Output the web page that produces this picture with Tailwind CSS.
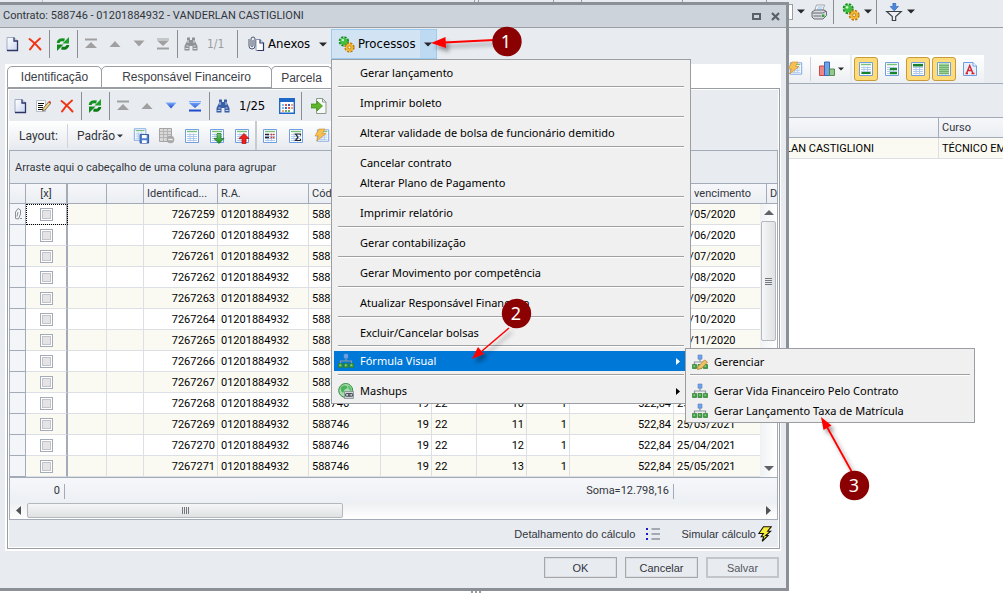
<!DOCTYPE html>
<html lang="pt-BR">
<head>
<meta charset="utf-8">
<title>Contrato: 588746</title>
<script src="https://cdn.jsdelivr.net/npm/@tailwindcss/browser@4"></script>
</head>
<body class="bg-white text-[11px] leading-4 text-[#32353c] font-['Roboto','Liberation_Sans',sans-serif]">

<svg class="absolute size-0" aria-hidden="true">
  <defs>
    <linearGradient id="gPage" x1="0" y1="0" x2="1" y2="1"><stop offset="0" stop-color="#fff"/><stop offset="1" stop-color="#c9d6f0"/></linearGradient>
    <linearGradient id="gBlue" x1="0" y1="0" x2="0" y2="1"><stop offset="0" stop-color="#7fb0ff"/><stop offset="1" stop-color="#1440c8"/></linearGradient>
    <linearGradient id="gGreen" x1="0" y1="0" x2="0" y2="1"><stop offset="0" stop-color="#6ed06e"/><stop offset="1" stop-color="#1d8a1d"/></linearGradient>
  </defs>
  <symbol id="doc" viewBox="0 0 16 16"><path d="M3 1.500h7l3.500 3.500v9.500H3z" fill="url(#gPage)" stroke="#a3acc4"/><path d="M10 1.500V5h3.500v9.500H3" fill="none" stroke="#2c3566" stroke-width="1.300"/></symbol>
  <symbol id="del" viewBox="0 0 16 16"><path d="M2.500 3C6 5.500 10 9.500 13.500 13.500M13 2.500C9 5.500 6 9 3 13.500" fill="none" stroke="#f03516" stroke-width="2" stroke-linecap="round"/></symbol>
  <symbol id="refresh" viewBox="0 0 16 16"><path d="M3.200 7C3.200 4.500 6 3 9.500 4" fill="none" stroke="#149020" stroke-width="3"/><path d="M14 1v6.500H7.500z" fill="#1fa02a"/><path d="M12.800 9c0 2.500-2.800 4-6.300 3" fill="none" stroke="#0d7a18" stroke-width="3"/><path d="M2 15V8.500h6.500z" fill="#128a1e"/></symbol>
  <symbol id="first" viewBox="0 0 16 16"><path d="M2 2.500h12v2H2zM8 6l6 6H2z" fill="#a0a0a0"/></symbol>
  <symbol id="up" viewBox="0 0 16 16"><path d="M8 5l5.500 6h-11z" fill="#a0a0a0"/></symbol>
  <symbol id="down" viewBox="0 0 16 16"><path d="M8 10.500l5.500-6h-11z" fill="#a0a0a0"/></symbol>
  <symbol id="last" viewBox="0 0 16 16"><path d="M2 11.500h12v2H2zM2 2.500h12v1H2zM8 10l6-5.500H2z" fill="#a0a0a0"/></symbol>
  <symbol id="downB" viewBox="0 0 16 16"><path d="M8 10.500l5.500-6h-11z" fill="url(#gBlue)"/></symbol>
  <symbol id="lastB" viewBox="0 0 16 16"><path d="M2 11.500h12v2H2zM2 3h12v1.200H2zM8 10l6-5H2z" fill="url(#gBlue)"/></symbol>
  <symbol id="bino" viewBox="0 0 16 16"><path d="M4 1.500h3V4h2V1.500h3V5l2.500 5v4.500h-5V10h-3v4.500h-5V10L4 5z" fill="currentColor"/><path d="M3.500 10h2M10.500 10h2M5 4v3M11 4v3M2.500 12.500h3M10.500 12.500h3" stroke="#fff" stroke-width="1" opacity=".75"/></symbol>
  <symbol id="clip" viewBox="0 0 18 16"><path d="M9 3.500h4l3.500 3.500v7.500H9z" fill="#fff" stroke="#8a94b0"/><path d="M13 3.500V7h3.500v7.500h-6" fill="none" stroke="#2c3566" stroke-width="1.200"/><path d="M2 3v7a3 3 0 006 0V3a2 2 0 00-4 0v6.500a1 1 0 002 0V4" fill="none" stroke="#4c566e" stroke-width="1"/></symbol>
  <symbol id="gears" viewBox="0 0 16 16"><circle cx="5.500" cy="5" r="3.800" fill="none" stroke="#178a1e" stroke-width="2.200" stroke-dasharray="2 1"/><circle cx="5.500" cy="5" r="3.400" fill="#3fc043"/><circle cx="4.500" cy="3.800" r="1.200" fill="#c8f5c4"/><circle cx="10.800" cy="10.800" r="3.800" fill="none" stroke="#c27d08" stroke-width="2.200" stroke-dasharray="2 1"/><circle cx="10.800" cy="10.800" r="3.400" fill="#f5b52c"/><circle cx="10.800" cy="10.800" r="1.300" fill="#fff3cf" stroke="#9c6a10" stroke-width=".6"/></symbol>
  <symbol id="edit" viewBox="0 0 16 16"><path d="M1.500 2.500h9v11h-9z" fill="#fff" stroke="#b6bccb"/><path d="M3 5.500h6M3 7.500h5M3 9.500h5M3 11.500h6" stroke="#111" stroke-width="1.100"/><path d="M8 10.500l5.500-6.500 2 1.600-5.300 6.400-2.600 1z" fill="#f2cf87" stroke="#5a4a2a" stroke-width=".7"/><path d="M13.500 4l1-1.200 2 1.500-1 1.300z" fill="#d43a30"/></symbol>
  <symbol id="cal" viewBox="0 0 16 16"><path d="M.7.700h14.600v14.600H.7z" fill="#fff" stroke="#1e68c8" stroke-width="1.400"/><path d="M1 1h14v3H1z" fill="#1e68c8"/><path d="M3 6h2v2H3zM3 9h2v2H3z" fill="#7cc0f0"/><path d="M6 6h2v2H6zM9 9h2v2H9z" fill="#e0584a"/><path d="M9 6h2v2H9zM6 9h2v2H6z" fill="#3c5fc8"/><path d="M12 6h2v2h-2zM12 9h2v2h-2zM3 12h2v2H3z" fill="#f4a070"/><path d="M6 12h2v2H6zM9 12h2v2H9z" fill="#63b463"/></symbol>
  <symbol id="docgo" viewBox="0 0 16 16"><path d="M5.500.500h6l3.500 3.500v11.500H5.500z" fill="#f6faf6" stroke="#8c9a8c"/><path d="M11.500.500V4H15" fill="none" stroke="#8c9a8c"/><path d="M0 6h6V3l5.500 5L6 13v-3H0z" fill="#5fb52c" stroke="#3b8a12" stroke-width=".7"/></symbol>
  <symbol id="grid" viewBox="0 0 16 16"><path d="M1.500 1.500h13v13h-13z" fill="#fff" stroke="#6f9fe0"/><path d="M3 3.500h10" stroke="#79c07d" stroke-width="1.500"/><path d="M3 6.500h10M3 8.500h10M3 10.500h10M3 12.500h10M6 5.500v8M9.500 5.500v8" stroke="#a9c4ec" stroke-width=".9"/></symbol>
  <symbol id="gsave" viewBox="0 0 18 17"><use href="#grid" width="15" height="15"/><path d="M7.500 7.500h9v9h-9z" fill="#4d80d0" stroke="#2a56a4"/><path d="M9.500 8h5v3.500h-5zM9.500 13.500h5v3h-5z" fill="#fff"/></symbol>
  <symbol id="ggray" viewBox="0 0 17 17"><path d="M1.500 1.500h12v13h-12z" fill="#d9d9d9" stroke="#a5a5a5"/><path d="M2 4.500h11M2 7.500h11M2 10.500h11M5.500 2v12M9.500 2v12" stroke="#b4b4b4"/><circle cx="12.500" cy="12.500" r="3.800" fill="#a8a8a8"/><path d="M10.300 12.500h4.400" stroke="#eee" stroke-width="1.400"/></symbol>
  <symbol id="gdown" viewBox="0 0 16 16"><use href="#grid" width="16" height="16"/><path d="M8 5.500h4v5h3l-5 5-5-5h3z" fill="url(#gGreen)" stroke="#1c6b1a" stroke-width=".7"/></symbol>
  <symbol id="gup" viewBox="0 0 16 16"><use href="#grid" width="16" height="16"/><path d="M8 15.500h4v-5h3l-5-5-5 5h3z" fill="#f0201c" stroke="#a40c0c" stroke-width=".7"/></symbol>
  <symbol id="gfmt" viewBox="0 0 16 16"><use href="#grid" width="16" height="16"/><path d="M3 6.500h4M3 9.500h4" stroke="#22262c" stroke-width="1.300"/><path d="M8.500 6.500h4M8.500 9.500h4" stroke="#d23838" stroke-width="1.300" stroke-dasharray="1.700 .7"/></symbol>
  <symbol id="gsum" viewBox="0 0 16 16"><use href="#grid" width="16" height="16"/><path d="M12.500 7.500V6h-5L10 9.200l-2.500 3.300h5V11" fill="none" stroke="#26282c" stroke-width="1.200"/></symbol>
  <symbol id="gbolt" viewBox="0 0 16 16"><use href="#grid" x="2" width="14" height="15"/><path d="M5 1h6L8.500 5.500H12L2.500 13 4.500 8H1z" fill="#f6c053" stroke="#c98a24" stroke-width=".6"/></symbol>
  <symbol id="chart" viewBox="0 0 17 16"><path d="M1 5h5v9.500H1z" fill="#ee8686" stroke="#c43b3b" stroke-width=".9"/><path d="M6 1h5v13.500H6z" fill="#6fa2e6" stroke="#2b5fae" stroke-width=".9"/><path d="M11 8h5v6.500h-5z" fill="#93c98d" stroke="#4a8644" stroke-width=".9"/></symbol>
  <symbol id="gtop" viewBox="0 0 16 16"><use href="#grid" width="16" height="16"/><path d="M3 3h10v2.500H3z" fill="#17822c"/></symbol>
  <symbol id="gbot" viewBox="0 0 16 16"><use href="#grid" width="16" height="16"/><path d="M3.500 11h9v2h-9z" fill="#17822c"/></symbol>
  <symbol id="gmid" viewBox="0 0 16 16"><use href="#grid" width="16" height="16"/><path d="M6 7h7v2.300H6zM6 11h7v2.300H6z" fill="#17822c"/></symbol>
  <symbol id="gall" viewBox="0 0 16 16"><use href="#grid" width="16" height="16"/><path d="M3 2.500h10v11H3z" fill="#9ed293"/><path d="M3 4.500h10M3 6.500h10M3 8.500h10M3 10.500h10M3 12.500h10" stroke="#5fa86b" stroke-width=".8"/></symbol>
  <symbol id="afont" viewBox="0 0 16 16"><path d="M1.500 1.500H11l3.500 3.500v9.500h-13z" fill="#e6f0fc" stroke="#6f9fe0"/><path d="M11 1.500V5h3.500" fill="#fff" stroke="#6f9fe0"/><path d="M4.500 12.500L7.700 4.500l3.300 8M5.700 9.500h4M3.500 12.500h2.500M9.500 12.500h3" fill="none" stroke="#d8232a" stroke-width="1.400"/></symbol>
  <symbol id="printer" viewBox="0 0 16 16"><path d="M5.500 1h8l-2 6h-8z" fill="#fff" stroke="#8a8f98" stroke-width=".8"/><path d="M6.500 3h5M6 5h5" stroke="#6fa8e0" stroke-width=".8"/><path d="M1 8l3-2h9l2.500 1.500v4L12 15H3l-2-2z" fill="#d8dbe0" stroke="#5c6068" stroke-width=".9"/><path d="M1.500 9h10.500l3-2M2.500 12h8" fill="none" stroke="#5c6068" stroke-width=".9"/><path d="M11 10.500h2.500V13H11z" fill="#27ad33"/></symbol>
  <symbol id="funnel" viewBox="0 0 16 16"><path d="M7 0h2.500v3H12L8.200 7 4.500 3H7z" fill="#4b86dc" stroke="#2a5db0" stroke-width=".5"/><path d="M1.500 7.500h13l-5 4.500v3.500h-3V12z" fill="#eceff3" stroke="#3c4046"/></symbol>
  <symbol id="tree" viewBox="0 0 16 16"><path d="M8 5v3M2.500 10.500V8h11v2.500" fill="none" stroke="#8d97a6" stroke-width="1.200"/><path d="M6 1h4v4.200H6z" fill="#6ea3ea" stroke="#5784c4" stroke-width=".6"/><path d="M.5 10.500h4v4h-4zM6 10.500h4v4H6zM11.500 10.500h4v4h-4z" fill="#43a045" stroke="#2d7d30" stroke-width=".7"/><path d="M1.500 11.500h1.500v1.200H1.500zM7 11.500h1.500v1.200H7zM12.500 11.500H14v1.200h-1.500z" fill="#9bdc98"/></symbol>
  <symbol id="treeEdit" viewBox="0 0 16 16"><use href="#tree" width="16" height="16"/><path d="M6 12.500l6.500-6.500 3 2-6 6.500-4 1z" fill="#edc069" stroke="#b58327" stroke-width=".8"/></symbol>
  <symbol id="mash" viewBox="0 0 16 16"><circle cx="7.700" cy="7.500" r="7" fill="#a9dcae" stroke="#2f8c40"/><path d="M2.500 4.500C5 1.500 9 2 9.500 4s-3 1.500-3.500 4-2 2-3-.5z" fill="#4bb25d"/><path d="M10 2.500c3 1 4 4 3.500 6L10.500 6z" fill="#5cbf6c"/><path d="M6.500 8.500h9v7h-9z" fill="#d2d6db" stroke="#7a8087" stroke-width=".7"/><rect x="7.500" y="10.500" width="4.500" height="2.800" rx="1.300" fill="none" stroke="#4d535a" stroke-width="1.100"/><rect x="10.500" y="10.500" width="4.300" height="2.800" rx="1.300" fill="none" stroke="#4d535a" stroke-width="1.100"/></symbol>
  <symbol id="list" viewBox="0 0 16 14"><path d="M1 1h2v2H1zM1 6h2v2H1zM1 11h2v2H1z" fill="#1818d8"/><path d="M6.500 2H15M6.500 7H15M6.500 12H15" stroke="#5f6670" stroke-width="1.200"/></symbol>
  <symbol id="bolt" viewBox="0 0 14 16"><path d="M5.500.700h7.800L9.700 5.200h3L7.800 9.500h2.300L4.200 15.300 5.800 10.700H3.200L5.300 7.500H.8z" fill="#f8ee3a" stroke="#14120a" stroke-width="1.100"/></symbol>
  <symbol id="caret" viewBox="0 0 8 5"><path d="M0 .500h8L4 4.500z" fill="currentColor"/></symbol>
  <symbol id="pin" viewBox="0 0 8 12"><path d="M1.500 9V4l2.500-3.500L6.500 2v4L4.500 11l-3-.500zM4 4L3 8.500M6 10.500h2" fill="none" stroke="#8c9096"/></symbol>
</svg>

<main class="relative flex min-h-screen flex-col overflow-hidden">

  <!-- main application -->
  <header class="flex h-7 items-center border-b border-[#9a9da2] bg-[#e8ecf1] pb-1 text-[#25272b]">
    <div class="flex w-[789px] shrink-0 self-stretch">
      <i class="ml-[42px] w-px bg-[#b9bdc3]"></i>
      <i class="ml-[431px] w-px bg-[#9a9da2]"></i>
      <i class="ml-[3px] w-px bg-[#9a9da2]"></i>
      <i class="ml-[74px] w-px bg-[#9a9da2]"></i>
      <i class="ml-[27px] w-px bg-[#9a9da2]"></i>
      <i class="ml-[100px] w-px bg-[#9a9da2]"></i>
      <i class="ml-[83px] w-px bg-[#9a9da2]"></i>
    </div>
    <span class="h-4 w-1 border-y border-r border-[#9a9da2] bg-white"></span>
    <svg class="ml-1 h-[5px] w-2"><use href="#caret"/></svg>
    <button type="button" aria-label="Imprimir" class="ml-1.5"><svg class="size-4"><use href="#printer"/></svg></button>
    <span class="ml-1.5 h-6 w-px bg-[#8a8d92]"></span>
    <button type="button" aria-label="Processos" class="ml-2 flex items-center gap-1"><svg class="size-[18px]"><use href="#gears"/></svg><svg class="h-[5px] w-2"><use href="#caret"/></svg></button>
    <span class="ml-1 h-6 w-px bg-[#8a8d92]"></span>
    <button type="button" aria-label="Filtro" class="ml-2 flex items-center gap-1"><svg class="size-[18px]"><use href="#funnel"/></svg><svg class="h-[5px] w-2"><use href="#caret"/></svg></button>
  </header>
  <div class="flex border-b border-[#a3abb9] bg-[#e8ecf1] pt-[27px] pl-[787px]">
    <div class="flex h-7 items-center bg-gradient-to-b from-white to-[#eceff2] pr-1.5">
      <svg class="size-4"><use href="#gbolt"/></svg>
      <span class="mx-[7px] h-6 w-px bg-[#cfd3d9]"></span>
      <svg class="h-4 w-[18px]"><use href="#chart"/></svg>
      <svg class="ml-0.5 h-1 w-1.5 text-[#25272b]"><use href="#caret"/></svg>
    </div>
    <div class="ml-0.5 flex h-7 items-center gap-0.5 bg-gradient-to-b from-white to-[#eceff2] px-0.5">
      <button type="button" aria-label="Rodapé" class="flex size-6 items-center justify-center rounded-[3px] border border-[#c79a3a] bg-[#ffdb7a]"><svg class="size-4"><use href="#gbot"/></svg></button>
      <button type="button" aria-label="Rodapé do grupo" class="flex size-6 items-center justify-center"><svg class="size-4"><use href="#gmid"/></svg></button>
      <button type="button" aria-label="Cabeçalho" class="flex size-6 items-center justify-center rounded-[3px] border border-[#c79a3a] bg-[#ffdb7a]"><svg class="size-4"><use href="#gtop"/></svg></button>
      <button type="button" aria-label="Linhas" class="flex size-6 items-center justify-center rounded-[3px] border border-[#c79a3a] bg-[#ffdb7a]"><svg class="size-4"><use href="#gall"/></svg></button>
      <button type="button" aria-label="Fonte" class="flex size-6 items-center justify-center"><svg class="size-4"><use href="#afont"/></svg></button>
    </div>
  </div>
  <div class="h-[33px] bg-[#e8ecf1]"></div>
  <table class="w-full table-fixed border-separate border-spacing-0">
    <colgroup><col class="w-[939px]"><col></colgroup>
    <thead><tr class="h-[21px]">
      <th class="border-y border-r border-[#a3abb9] bg-gradient-to-b from-[#f6f7fa] to-[#eaedf2] p-0"></th>
      <th class="border-y border-[#a3abb9] bg-gradient-to-b from-[#f6f7fa] to-[#eaedf2] p-0 pl-[3px] text-left font-normal">Curso</th>
    </tr></thead>
    <tbody><tr class="h-[21px] text-black">
      <td class="overflow-hidden border-r border-b border-[#dcdfe3] bg-[#fbfaf2] p-0 pt-px pl-[785px] whitespace-nowrap">LAN CASTIGLIONI</td>
      <td class="overflow-hidden border-b border-[#dcdfe3] bg-[#fbfaf2] p-0 pt-px pl-[3px] whitespace-nowrap">TÉCNICO EM</td>
    </tr></tbody>
  </table>
  <div class="mt-auto flex h-0.5 gap-0.5 pl-[471px]"><i class="w-0.5 bg-[#9a9da2]"></i><i class="w-0.5 bg-[#9a9da2]"></i><i class="w-0.5 bg-[#9a9da2]"></i></div>

  <!-- contract window -->
  <section aria-label="Contrato" class="absolute top-0.5 left-0 w-[789px] border-y-[3px] border-r-[3px] border-[#8b9096] bg-[#e8ecf1]">
    <div class="flex h-[23px] items-center border-b border-[#9a9da2] bg-[#ccd3db] pr-1.5 pl-[3px]">
      <h1 class="grow">Contrato: 588746 - 01201884932 - VANDERLAN CASTIGLIONI</h1>
      <button type="button" aria-label="Maximizar" class="mr-2.5 h-[7px] w-[9px] border-2 border-[#5b6068]"></button>
      <button type="button" aria-label="Fechar"><svg class="size-[9px]" viewBox="0 0 9 9"><path d="M1 1l7 7M8 1L1 8" stroke="#5b6068" stroke-width="2.200"/></svg></button>
    </div>

    <div class="flex h-8 items-center font-['DejaVu_Sans_Condensed','Noto_Sans',sans-serif] text-[13px] text-black">
      <button type="button" aria-label="Novo" class="flex w-[23px] justify-center"><svg class="size-4"><use href="#doc"/></svg></button>
      <button type="button" aria-label="Excluir" class="flex w-6 justify-center"><svg class="size-4"><use href="#del"/></svg></button>
      <span class="mr-px ml-0.5 h-7 w-px bg-[#8a8d92]"></span>
      <button type="button" aria-label="Atualizar" class="flex w-6 justify-center"><svg class="size-4"><use href="#refresh"/></svg></button>
      <span class="mr-px ml-0.5 h-7 w-px bg-[#8a8d92]"></span>
      <button type="button" aria-label="Primeiro" class="flex w-6 justify-center"><svg class="size-4"><use href="#first"/></svg></button>
      <button type="button" aria-label="Anterior" class="flex w-6 justify-center"><svg class="size-4"><use href="#up"/></svg></button>
      <button type="button" aria-label="Próximo" class="flex w-6 justify-center"><svg class="size-4"><use href="#down"/></svg></button>
      <button type="button" aria-label="Último" class="flex w-6 justify-center"><svg class="size-4"><use href="#last"/></svg></button>
      <span class="mr-px ml-0.5 h-7 w-px bg-[#8a8d92]"></span>
      <button type="button" aria-label="Localizar" class="flex w-6 justify-center text-[#8f9297]"><svg class="size-4"><use href="#bino"/></svg></button>
      <span class="w-8 pl-1 text-[12px] text-[#9a9ca0]">1/1</span>
      <span class="mr-px ml-0.5 h-7 w-px bg-[#8a8d92]"></span>
      <button type="button" class="flex w-[92px] items-center pr-1 pl-2"><svg class="mr-[3px] h-4 w-[18px]"><use href="#clip"/></svg>Anexos<svg class="ml-auto h-[5px] w-2 text-[#25272b]"><use href="#caret"/></svg></button>
      <button type="button" class="flex h-[30px] w-[106px] items-center border border-[#9ccdf0] bg-[#d2e4f4] pl-1.5"><svg class="mr-[3px] size-[17px]"><use href="#gears"/></svg>Processos<span class="ml-auto flex h-full w-4 items-center justify-center bg-[#bddaf2]"><svg class="h-[5px] w-2 text-[#25272b]"><use href="#caret"/></svg></span></button>
    </div>

    <div class="mt-1 mr-[5px] ml-[5px] bg-white px-px pb-0.5">
      <div role="tablist" class="ml-px flex h-6 items-stretch pt-0.5 font-['Liberation_Sans',sans-serif] text-[12px] text-[#3c4048]">
        <button role="tab" type="button" class="w-[95px] rounded-t-[5px] border border-[#9a9da2]">Identificação</button>
        <button role="tab" type="button" class="-ml-px w-[171px] rounded-t-[5px] border border-[#9a9da2]">Responsável Financeiro</button>
        <button role="tab" type="button" aria-selected="true" class="-ml-px w-[61px] rounded-t-[5px] border border-b-0 border-[#9a9da2]">Parcela</button>
      </div>

      <div class="ml-px border border-[#9a9da2] bg-white p-px">
        <div class="bg-[#e8ecf1]">
          <div class="flex h-[31px] items-center font-['DejaVu_Sans_Condensed','Noto_Sans',sans-serif] text-[13px] text-black">
            <button type="button" aria-label="Nova parcela" class="flex w-[22px] justify-center"><svg class="size-4"><use href="#doc"/></svg></button>
            <button type="button" aria-label="Editar parcela" class="flex w-6 justify-center"><svg class="size-4"><use href="#edit"/></svg></button>
            <button type="button" aria-label="Excluir parcela" class="flex w-6 justify-center"><svg class="size-4"><use href="#del"/></svg></button>
            <span class="mr-px ml-0.5 h-7 w-px bg-[#8a8d92]"></span>
            <button type="button" aria-label="Atualizar parcelas" class="flex w-6 justify-center"><svg class="size-4"><use href="#refresh"/></svg></button>
            <span class="mr-px ml-0.5 h-7 w-px bg-[#8a8d92]"></span>
            <button type="button" aria-label="Primeira parcela" class="flex w-6 justify-center"><svg class="size-4"><use href="#first"/></svg></button>
            <button type="button" aria-label="Parcela anterior" class="flex w-6 justify-center"><svg class="size-4"><use href="#up"/></svg></button>
            <button type="button" aria-label="Próxima parcela" class="flex w-6 justify-center"><svg class="size-4"><use href="#downB"/></svg></button>
            <button type="button" aria-label="Última parcela" class="flex w-6 justify-center"><svg class="size-4"><use href="#lastB"/></svg></button>
            <span class="mr-px ml-0.5 h-7 w-px bg-[#8a8d92]"></span>
            <button type="button" aria-label="Localizar parcela" class="flex w-6 justify-center text-[#3a5ea8]"><svg class="size-4"><use href="#bino"/></svg></button>
            <span class="w-10 pl-1 text-[13px]">1/25</span>
            <button type="button" aria-label="Calendário" class="flex w-6 justify-center"><svg class="size-4"><use href="#cal"/></svg></button>
            <span class="mr-px ml-0.5 h-7 w-px bg-[#8a8d92]"></span>
            <button type="button" aria-label="Exportar" class="flex w-8 justify-center"><svg class="size-4"><use href="#docgo"/></svg></button>
          </div>

          <div class="flex h-[29px] w-[340px] items-center bg-gradient-to-b from-white to-[#e6e9ee] pl-2.5 text-[12px]">
            <span class="w-12">Layout:</span>
            <span class="h-6 w-px bg-[#d0d4da]"></span>
            <button type="button" class="ml-[9px] flex w-[56px] items-center gap-0.5">Padrão<svg class="h-1 w-1.5"><use href="#caret"/></svg></button>
            <svg class="size-[17px]"><use href="#gsave"/></svg>
            <svg class="ml-2 size-[17px]"><use href="#ggray"/></svg>
            <svg class="ml-[9px] size-4"><use href="#grid"/></svg>
            <svg class="ml-[9px] size-4"><use href="#gdown"/></svg>
            <svg class="ml-[9px] size-4"><use href="#gup"/></svg>
            <span class="mx-[5px] h-[29px] w-0.5 bg-[#c6cad1]"></span>
            <svg class="size-4"><use href="#gfmt"/></svg>
            <svg class="ml-2.5 size-4"><use href="#gsum"/></svg>
            <svg class="ml-2.5 size-4"><use href="#gbolt"/></svg>
          </div>

          <div class="border border-[#a3abb9]">
            <p class="flex h-[33px] items-center border-b border-[#a3abb9] pt-px pl-[5px]">Arraste aqui o cabeçalho de uma coluna para agrupar</p>
            <div class="relative">
              <table class="w-full table-fixed border-separate border-spacing-0">
                <colgroup><col class="w-4"><col class="w-[42px]"><col class="w-[39px]"><col class="w-[37px]"><col class="w-[74px]"><col class="w-[91px]"><col class="w-[72px]"><col class="w-[51px]"><col class="w-[45px]"><col class="w-[50px]"><col class="w-[43px]"><col class="w-[104px]"><col class="w-[93px]"><col></colgroup>
                <thead id="head"></thead>
                <tbody id="rows" class="text-black"></tbody>
              </table>
              <div class="absolute top-5 right-0 bottom-0 flex w-[17px] flex-col items-center bg-gradient-to-r from-[#f0f1f3] to-white">
                <svg class="my-[6px] h-[5px] w-2.5" viewBox="0 0 10 5"><path d="M5 0l5 5H0z" fill="#5f6369"/></svg>
                <div class="flex h-[120px] w-[15px] flex-col items-center justify-center gap-px rounded-[2px] border border-[#b3b7be] bg-gradient-to-r from-[#f5f6f7] to-[#dfe1e3]">
                  <i class="h-px w-[7px] bg-[#74787e]"></i><i class="h-px w-[7px] bg-[#74787e]"></i><i class="h-px w-[7px] bg-[#74787e]"></i><i class="h-px w-[7px] bg-[#74787e]"></i>
                </div>
                <svg class="mt-auto mb-[6px] h-[5px] w-2.5" viewBox="0 0 10 5"><path d="M5 5l5-5H0z" fill="#5f6369"/></svg>
              </div>
            </div>
            <div class="flex h-[25px] items-center border-t border-[#a3abb9] bg-gradient-to-b from-[#f6f7fa] to-[#edf0f4] pt-0.5">
              <span class="flex h-[15px] w-[55px] items-center justify-end border-r border-[#a3abb9] pr-1">0</span>
              <span class="ml-auto flex h-[15px] items-center border-r border-[#a3abb9] pr-1">Soma=12.798,16</span>
              <span class="w-[103px]"></span>
            </div>
            <div class="flex h-[17px] items-center bg-gradient-to-b from-[#eeeff1] to-white pr-1.5 pl-1.5">
              <svg class="h-[9px] w-[5px]" viewBox="0 0 5 9"><path d="M5 0v9L0 4.500z" fill="#4f5358"/></svg>
              <div class="ml-1.5 flex h-[15px] w-[316px] items-center justify-center gap-px rounded-[2px] border border-[#b3b7be] bg-gradient-to-b from-[#f5f6f7] to-[#dfe1e3]">
                <i class="h-[7px] w-px bg-[#74787e]"></i><i class="h-[7px] w-px bg-[#74787e]"></i><i class="h-[7px] w-px bg-[#74787e]"></i><i class="h-[7px] w-px bg-[#74787e]"></i>
              </div>
              <svg class="ml-auto h-[9px] w-[5px]" viewBox="0 0 5 9"><path d="M0 0v9l5-4.500z" fill="#4f5358"/></svg>
            </div>
          </div>

          <div class="flex h-[27px] items-center justify-end pr-1.5 font-['Liberation_Sans',sans-serif] text-[11px]">
            <button type="button" class="flex items-center gap-2.5">Detalhamento do cálculo<svg class="h-3.5 w-4"><use href="#list"/></svg></button>
            <button type="button" class="ml-5 flex items-center gap-0.5">Simular cálculo<svg class="h-4 w-3.5"><use href="#bolt"/></svg></button>
          </div>
        </div>
      </div>
    </div>

    <footer class="flex justify-end gap-2 pt-1.5 pr-[7px] pb-2.5 font-['Liberation_Sans',sans-serif] text-[11px]">
      <button type="button" class="h-[21px] w-[73px] border border-[#a4a6a9] outline outline-1 -outline-offset-2 outline-[#dcdee1]">OK</button>
      <button type="button" class="h-[21px] w-[73px] border border-[#a4a6a9] outline outline-1 -outline-offset-2 outline-[#dcdee1]">Cancelar</button>
      <button type="button" class="h-[21px] w-[73px] border-2 border-[#c3c5c8] text-[#55585e]">Salvar</button>
    </footer>
  </section>

  <!-- Processos menu -->
  <div role="menu" aria-label="Processos" class="absolute top-[59px] left-[331px] w-[360px] border border-[#9a9da2] bg-[#f0f0f0] px-0.5 pt-[3px] pb-0.5 font-['Noto_Sans','Open_Sans',sans-serif] text-[11px] text-black">
    <button role="menuitem" type="button" class="block h-5 w-full pl-[26px] text-left">Gerar lançamento</button>
    <hr class="mx-1 mt-[3px] mb-[5px] h-0.5 border-t border-b border-t-[#a0a0a0] border-b-white">
    <button role="menuitem" type="button" class="block h-5 w-full pl-[26px] text-left">Imprimir boleto</button>
    <hr class="mx-1 mt-[3px] mb-[5px] h-0.5 border-t border-b border-t-[#a0a0a0] border-b-white">
    <button role="menuitem" type="button" class="block h-5 w-full pl-[26px] text-left">Alterar validade de bolsa de funcionário demitido</button>
    <hr class="mx-1 mt-[3px] mb-[5px] h-0.5 border-t border-b border-t-[#a0a0a0] border-b-white">
    <button role="menuitem" type="button" class="block h-5 w-full pl-[26px] text-left">Cancelar contrato</button>
    <button role="menuitem" type="button" class="block h-5 w-full pl-[26px] text-left">Alterar Plano de Pagamento</button>
    <hr class="mx-1 mt-[3px] mb-[5px] h-0.5 border-t border-b border-t-[#a0a0a0] border-b-white">
    <button role="menuitem" type="button" class="block h-5 w-full pl-[26px] text-left">Imprimir relatório</button>
    <hr class="mx-1 mt-[3px] mb-[5px] h-0.5 border-t border-b border-t-[#a0a0a0] border-b-white">
    <button role="menuitem" type="button" class="block h-5 w-full pl-[26px] text-left">Gerar contabilização</button>
    <hr class="mx-1 mt-[3px] mb-[5px] h-0.5 border-t border-b border-t-[#a0a0a0] border-b-white">
    <button role="menuitem" type="button" class="block h-5 w-full pl-[26px] text-left">Gerar Movimento por competência</button>
    <hr class="mx-1 mt-[3px] mb-[5px] h-0.5 border-t border-b border-t-[#a0a0a0] border-b-white">
    <button role="menuitem" type="button" class="block h-5 w-full pl-[26px] text-left">Atualizar Responsável Financeiro</button>
    <hr class="mx-1 mt-[3px] mb-[5px] h-0.5 border-t border-b border-t-[#a0a0a0] border-b-white">
    <button role="menuitem" type="button" class="block h-5 w-full pl-[26px] text-left">Excluir/Cancelar bolsas</button>
    <hr class="mx-1 mt-0.5 mb-1 h-0.5 border-t border-b border-t-[#a0a0a0] border-b-white">
    <button role="menuitem" type="button" aria-expanded="true" class="flex h-5 w-full items-center bg-[#0078d7] pr-2 pl-1 text-white"><svg class="mr-1.5 size-4"><use href="#tree"/></svg>Fórmula Visual<svg class="ml-auto h-[7px] w-1" viewBox="0 0 4 7"><path d="M0 0v7l4-3.500z" fill="#fff"/></svg></button>
    <hr class="mx-1 mt-[3px] mb-[5px] h-0.5 border-t border-b border-t-[#a0a0a0] border-b-white">
    <button role="menuitem" type="button" class="flex h-5 w-full items-center pr-2 pl-1"><svg class="mr-1.5 size-4"><use href="#mash"/></svg>Mashups<svg class="ml-auto h-[7px] w-1" viewBox="0 0 4 7"><path d="M0 0v7l4-3.500z" fill="#000"/></svg></button>
  </div>

  <div role="menu" aria-label="Fórmula Visual" class="absolute top-[348px] left-[685px] w-[290px] border border-[#9a9da2] bg-[#f0f0f0] px-0.5 pt-[3px] pb-px font-['Noto_Sans','Open_Sans',sans-serif] text-[11px] text-black">
    <button role="menuitem" type="button" class="flex h-5 w-full items-center pl-1"><svg class="mr-1.5 size-4"><use href="#treeEdit"/></svg>Gerenciar</button>
    <hr class="mx-0.5 mt-0.5 mb-[5px] h-0.5 border-t border-b border-t-[#a0a0a0] border-b-white">
    <button role="menuitem" type="button" class="flex h-5 w-full items-center pl-1"><svg class="mr-1.5 size-4"><use href="#tree"/></svg>Gerar Vida Financeiro Pelo Contrato</button>
    <button role="menuitem" type="button" class="flex h-5 w-full items-center pl-1"><svg class="mr-1.5 size-4"><use href="#tree"/></svg>Gerar Lançamento Taxa de Matrícula</button>
  </div>

  <!-- numbered callouts -->
  <svg class="pointer-events-none absolute top-0 left-0" width="1003" height="593" viewBox="0 0 1003 593">
    <defs><filter id="sh" x="-20%" y="-50%" width="150%" height="250%"><feDropShadow dx="3" dy="4" stdDeviation="2" flood-color="#000" flood-opacity=".4"/></filter></defs>
    <g filter="url(#sh)" fill="#ff0000" stroke="#ff0000">
      <path d="M494 40L444 42.500" stroke-width="1.800"/><path d="M431 43l14.500-6 .5 11z" stroke="none"/>
      <path d="M509 328L482 351" stroke-width="1.500"/><path d="M472 359l6-12 6 7z" stroke="none"/>
      <path d="M853 474L827 427" stroke-width="1.800"/><path d="M821 417l10.500 8.500-8 4.500z" stroke="none"/>
    </g>
    <g fill="#8b0000"><circle cx="507" cy="41.500" r="14.700"/><circle cx="516.500" cy="313.500" r="14.700"/><circle cx="854.500" cy="485.500" r="14.700"/></g>
    <g fill="#fff" font-family="Noto Sans, sans-serif" font-size="18" text-anchor="middle"><text x="506" y="48">1</text><text x="516" y="320">2</text><text x="854" y="492">3</text></g>
  </svg>
</main>

<script>
// Table header
const heads = ['', '[x]', '', '', 'Identificad...', 'R.A.', 'Código', '', '', '', '', '', 'Dt. vencimento', 'D'];
document.getElementById('head').innerHTML = '<tr class="h-5">' + heads.map((t, i) => {
  const edge = i === 13 ? 'border-r-0' : i === 1 ? 'border-r-2' : 'border-r';
  const align = i === 1 ? 'text-center' : i === 12 ? 'text-right pr-[15px]' : 'text-left pl-[3px]';
  return `<th scope="col" class="overflow-hidden border-b border-[#a3abb9] bg-gradient-to-b from-[#f6f7fa] to-[#eaedf2] p-0 font-normal whitespace-nowrap ${edge} ${align}">${t}</th>`;
}).join('') + '</tr>';

// Installments: one row per month, from May 2020
let out = '';
for (let n = 0; n < 13; n++) {
  const month = (n + 4) % 12 + 1, year = n + 4 < 12 ? 2020 : 2021;
  const bg = n % 2 ? 'bg-white' : 'bg-[#fbfaf2]';
  const left = 'border-r border-b border-[#dcdfe3] p-0 pt-px pl-[3px] text-left';
  const right = 'border-r border-b border-[#dcdfe3] p-0 pt-px pr-0.5 text-right';
  out += `<tr class="h-[21px] ${bg}">
    <td class="border-r border-b border-[#a3abb9] bg-[#f3f5f8] p-0">${n ? '' : '<svg class="mx-auto h-3 w-2"><use href="#pin"/></svg>'}</td>
    <td class="border-r-2 border-b border-r-[#a3abb9] border-b-[#dcdfe3] p-0 ${n ? '' : 'bg-white outline-1 -outline-offset-1 outline-dotted outline-black'}"><input type="checkbox" aria-label="Selecionar parcela ${n + 1}" class="mx-auto block size-[13px] appearance-none border border-[#a3abb9] bg-[#e4e4e6] shadow-[inset_0_0_0_1px_#fff,inset_0_0_0_2px_#c4c4c8]"></td>
    <td class="${left}"></td><td class="${left}"></td>
    <td class="${right}">${7267259 + n}</td>
    <td class="${left}">01201884932</td>
    <td class="${left}">588746</td>
    <td class="${right}">19</td>
    <td class="${left}">22</td>
    <td class="${right}">${n + 1}</td>
    <td class="${right}">1</td>
    <td class="${right}">522,84</td>
    <td class="${left}">25/${String(month).padStart(2, '0')}/${year}</td>
    <td class="${left}"></td>
  </tr>`;
}
document.getElementById('rows').innerHTML = out;
</script>
</body>
</html>
